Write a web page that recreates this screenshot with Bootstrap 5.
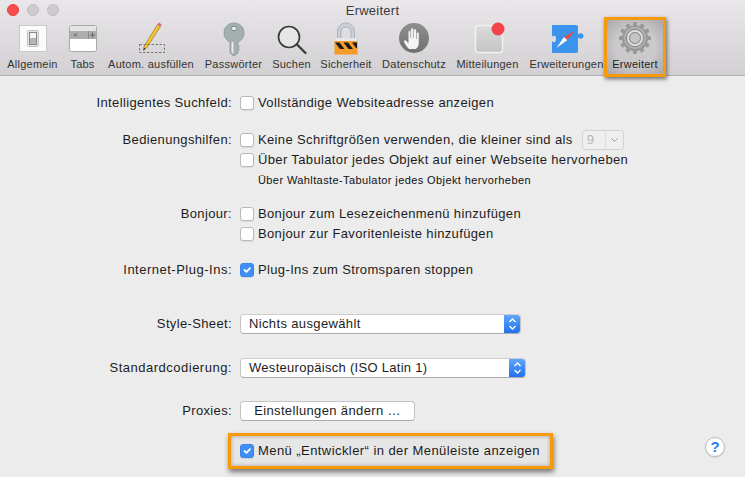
<!DOCTYPE html>
<html lang="de"><head><meta charset="utf-8"><title>Erweitert</title>
<link href="https://cdn.jsdelivr.net/npm/bootstrap@5.3.0/dist/css/bootstrap.min.css" rel="stylesheet">
<style>
html,body{height:100%}
body{width:745px;height:477px;overflow:hidden;background:#ececec;font-family:"Liberation Sans",Arial,sans-serif;font-size:13px;line-height:20px;color:#1c1c1c;letter-spacing:.36px}
.topbar{height:76px;background:linear-gradient(#e9e7e9,#d2d0d2);border-bottom:1px solid #b1b1b1;position:relative}
.lights{position:absolute;left:7px;top:4px;gap:8px}
.lamp{width:12px;height:12px;border-radius:50%;background:#cdcbcd;border:1px solid #c0bec0}
.lamp-red{background:#fb4c4e;border-color:#ea4042}
.wintitle{height:20px;line-height:21px;font-size:13px;color:#3c3c3c;letter-spacing:.25px}
.tools{padding-left:7px;height:55px}
.tool{font-size:11px;line-height:14px;color:#333;letter-spacing:.24px;white-space:nowrap;height:55px;padding-top:1px}
.tool svg{display:block;height:36px;width:36px}
.t1{width:51px}.t2{width:25px;margin-left:12px}.t3{width:88px;margin-left:12px}.t4{width:59px;margin-left:9px}.t5{width:39px;margin-left:9px}.t6{width:52px;margin-left:9px}.t7{width:66px;margin-left:9px}.t8{width:65px;margin-left:8px}.t9{width:75px;margin-left:9px}
.tool-hot{position:absolute;left:604px;top:17px;width:62px;height:60px;border:3px solid #f79a0a;background:radial-gradient(ellipse at center,#cbc9cb 50%,#a8a6a8 100%);box-shadow:1px 2px 4px rgba(0,0,0,.55);padding-top:1px;color:#222}
.prefs{padding-top:17px}
.prow{height:20px}
.plabel{width:232px;text-align:right;margin-right:8px;flex:none}
.plabel-wide{letter-spacing:.5px}
.form-check-input.tick{width:14px;height:14px;margin:3px 4px 0 0;flex:none;border:1px solid #b9b9b9;border-radius:3px;background-color:#fff;box-shadow:0 1px 1px rgba(0,0,0,.08)}
.form-check-input.tick:checked{background-color:#3f8ff7;border-color:#3a84e8}
.hint{font-size:11px;margin-left:258px;letter-spacing:.4px;color:#111}
.gap-a{margin-top:17px}.gap-b{margin-top:14px}.gap-c{margin-top:16px}.gap-d{margin-top:34px}.gap-e{margin-top:24px}.gap-f{margin-top:23px}
.sizebox{width:42px;height:20px;border:1px solid #d4d4d4;border-radius:3px;margin-left:9px;background:#efefef;color:#b5b5b5;font-size:13px;padding-left:4px;line-height:18px}
.sizebox i{margin-left:auto;width:18px;border-left:1px solid #dedede;height:18px}
.picker{height:20px;line-height:18px;background:#fff;border:1px solid #c4c4c4;border-top-color:#cdcdcd;border-bottom-color:#ababab;border-radius:4px;padding:0 0 0 8px;overflow:hidden}
.picker-a{width:281px}.picker-b{width:286px;letter-spacing:.29px}
.cap{margin-left:auto;width:17px;height:20px;margin-top:-1px;margin-right:-1px;background:linear-gradient(#62a9fb,#1f6eee)}
.pushbtn{width:175px;height:20px;background:#fff;border:1px solid #c4c4c4;border-bottom-color:#ababab;border-radius:4px;text-align:center;padding:0;font-size:13px;line-height:18px;color:#1c1c1c;letter-spacing:.36px}
.callout{margin-left:228px;width:325px;height:36px;border:3px solid #f79a0a;box-shadow:1px 3px 5px rgba(0,0,0,.5),inset 0 0 4px rgba(0,0,0,.3);padding-left:9px;margin-top:12px;position:relative;background:#e6e6e6;letter-spacing:.43px}
.helpdot{position:absolute;left:705px;top:437px;width:20px;height:20px;border-radius:50%;background:#fff;border:1px solid #bcbcbc;color:#2d7ff0;font-weight:700;font-size:15px;line-height:18px;text-align:center;letter-spacing:0;box-shadow:0 1px 1px rgba(0,0,0,.1)}
</style></head>
<body>
<div class="topbar">
  <div class="lights d-flex"><span class="lamp lamp-red"></span><span class="lamp"></span><span class="lamp"></span></div>
  <div class="wintitle text-center">Erweitert</div>
  <div class="tools d-flex">
    <div class="tool t1 d-flex flex-column align-items-center">
      <svg viewBox="0 0 36 36"><rect x="4.500" y="4.500" width="27" height="26" fill="#fbfbfb" stroke="#c9c9c9"/><rect x="12.500" y="9.500" width="11" height="16" rx="1" fill="#e2e2e2" stroke="#c4c4c4"/><rect x="14.500" y="11.500" width="7" height="12" fill="#f4f4f4" stroke="#8a8a8a"/><rect x="15" y="17" width="6" height="6" fill="#b5b5b5"/></svg>
      Allgemein</div>
    <div class="tool t2 d-flex flex-column align-items-center">
      <svg viewBox="0 0 36 36"><rect x="4.500" y="4.500" width="27" height="26" rx="2" fill="#fff" stroke="#a8a8a8"/><rect x="5" y="5" width="26" height="5" fill="#e4e4e4"/><rect x="5" y="10" width="26" height="8" fill="#adadad"/><path d="M9 12.500l3 3M12 12.500l-3 3" stroke="#666" fill="none"/><path d="M23.500 10v8" stroke="#888"/><path d="M27.500 11.500v5M25 14h5" stroke="#666"/></svg>
      Tabs</div>
    <div class="tool t3 d-flex flex-column align-items-center">
      <svg viewBox="0 0 36 36"><path d="M24.500 3.500L27.500 5.500 13.500 27 10.500 29.500 11 25.500z" fill="#f1c232" stroke="#8b6b10" stroke-width=".6"/><path d="M24.500 3.500l1.300-2 3 2-1.300 2z" fill="#d6688a"/><path d="M10.500 29.500l.5-3 1.500 1z" fill="#333"/><rect x="6.500" y="23.500" width="25" height="8" fill="none" stroke="#777" stroke-dasharray="2.500 1.500"/></svg>
      Autom. ausfüllen</div>
    <div class="tool t4 d-flex flex-column align-items-center">
      <svg viewBox="0 0 36 36"><path d="M18 2c5.800 0 10 4.200 10 10 0 4.200-2.500 7.500-6 9v3l1.500 1.500-1.500 1.500 1.500 1.500-1.500 1.500v2l-3 2.500h-2l-3-2.500V21c-3.500-1.500-6-4.800-6-9C8 6.200 12.200 2 18 2z" fill="#a3aeaf" stroke="#87918f" stroke-width=".7"/><ellipse cx="18" cy="7.500" rx="2.800" ry="2.200" fill="#e6e9e9" stroke="#7e8889"/><path d="M16.500 21v11" stroke="#e6eaea" stroke-width="2"/></svg>
      Passwörter</div>
    <div class="tool t5 d-flex flex-column align-items-center">
      <svg viewBox="0 0 36 36"><circle cx="15" cy="16" r="10.500" fill="#f4f4f4" fill-opacity=".4" stroke="#3a3a3a" stroke-width="1.700"/><path d="M23 23.500l8.500 8.500" stroke="#3a3a3a" stroke-width="2.300" stroke-linecap="round"/></svg>
      Suchen</div>
    <div class="tool t6 d-flex flex-column align-items-center">
      <svg viewBox="0 0 36 36"><path d="M9.500 18v-7c0-5.500 4-9 8.500-9s8.500 3.500 8.500 9v7h-3.500v-7c0-3.200-2.200-5-5-5s-5 1.800-5 5v7z" fill="#c9d0da" stroke="#98a0ab" stroke-width=".7"/><rect x="6.500" y="17" width="23" height="16.500" fill="#f49b2a"/><rect x="6.500" y="17" width="23" height="3" fill="#e3e7ec"/><path d="M7 21.500h4.500l5 6.500H12zM15.500 21.500H20l5 6.500h-4.500zM24 21.500h5V27h-1z" fill="#1a1a1a"/></svg>
      Sicherheit</div>
    <div class="tool t7 d-flex flex-column align-items-center">
      <svg viewBox="0 0 36 36"><defs><linearGradient id="hg" x1="0" y1="0" x2="0" y2="1"><stop offset="0" stop-color="#8f8f8f"/><stop offset="1" stop-color="#6f6f6f"/></linearGradient></defs><circle cx="18" cy="17" r="15" fill="url(#hg)"/><path d="M13 28c-2-2-4.500-5.500-5-7.500 0-1.500 1.500-1.500 2.500-.5l2 2.500V11c0-1.700 2-1.700 2 0v6h.6V8.500c0-1.700 2.300-1.700 2.300 0V17h.6V9.500c0-1.700 2.200-1.700 2.200 0V18h.6v-5.500c0-1.500 2-1.500 2 0V22c0 3-1.500 5-3 6h-6z" fill="#f4f4f4"/></svg>
      Datenschutz</div>
    <div class="tool t8 d-flex flex-column align-items-center">
      <svg viewBox="0 0 36 36"><defs><linearGradient id="mg" x1="0" y1="0" x2="0" y2="1"><stop offset="0" stop-color="#dcdcdc"/><stop offset="1" stop-color="#c4c4c4"/></linearGradient></defs><rect x="5.500" y="4.500" width="27" height="27" rx="3" fill="url(#mg)" stroke="#f2f2f2" stroke-width="1.500"/><circle cx="28" cy="8" r="6.500" fill="#f3424a"/></svg>
      Mitteilungen</div>
    <div class="tool t9 d-flex flex-column align-items-center">
      <svg viewBox="0 0 36 36"><path d="M3.500 4h23.500c1.200 0 2 .8 2 2v7.500c2-2 5.500-1.500 5.500 1.500s-3.500 3.500-5.500 1.500V30c0 1.200-.8 2-2 2H4.500c-1 0-1.500-.5-1.500-1.500V20.500c2.500 1.500 4 .5 4-2.500s-1.500-4-4-2.500V5c0-.6.300-1 .5-1z" fill="#3a93ec"/><path d="M7.500 27l7.500-11 3.500 3z" fill="#fff"/><path d="M25.500 10l-10.500 6 3.500 3z" fill="#ea4b45"/></svg>
      Erweiterungen</div>
    <div class="tool tool-hot d-flex flex-column align-items-center">
      <svg viewBox="0 0 36 36"><defs><linearGradient id="gg" x1="0" y1="0" x2="0" y2="1"><stop offset="0" stop-color="#a6a6a6"/><stop offset="1" stop-color="#8c8c8c"/></linearGradient></defs><g fill="url(#gg)"><circle cx="18" cy="17" r="13"/></g><g fill="#999"><rect x="16" y="1" width="4" height="32" rx="1"/><rect x="16" y="1" width="4" height="32" rx="1" transform="rotate(30 18 17)"/><rect x="16" y="1" width="4" height="32" rx="1" transform="rotate(60 18 17)"/><rect x="16" y="1" width="4" height="32" rx="1" transform="rotate(90 18 17)"/><rect x="16" y="1" width="4" height="32" rx="1" transform="rotate(120 18 17)"/><rect x="16" y="1" width="4" height="32" rx="1" transform="rotate(150 18 17)"/></g><circle cx="18" cy="17" r="11" fill="#b0b0b0"/><circle cx="18" cy="17" r="8.500" fill="none" stroke="#7f7f7f" stroke-width="1"/><circle cx="18" cy="17" r="7" fill="none" stroke="#dedede" stroke-width="2"/><circle cx="18" cy="17" r="5.500" fill="#c6c4c6" stroke="#8c8c8c"/></svg>
      Erweitert</div>
  </div>
</div>
<div class="prefs">
  <div class="prow d-flex"><div class="plabel">Intelligentes Suchfeld:</div><input class="form-check-input tick" type="checkbox"><span>Vollständige Websiteadresse anzeigen</span></div>
  <div class="prow d-flex gap-a"><div class="plabel">Bedienungshilfen:</div><input class="form-check-input tick" type="checkbox"><span>Keine Schriftgrößen verwenden, die kleiner sind als</span><div class="sizebox d-flex">9<i class="d-flex align-items-center justify-content-center"><svg width="9" height="6" viewBox="0 0 9 6"><path d="M1.500 1.500L4.500 4.500 7.500 1.500" fill="none" stroke="#9a9a9a"/></svg></i></div></div>
  <div class="prow d-flex"><div class="plabel"></div><input class="form-check-input tick" type="checkbox"><span>Über Tabulator jedes Objekt auf einer Webseite hervorheben</span></div>
  <div class="prow hint">Über Wahltaste-Tabulator jedes Objekt hervorheben</div>
  <div class="prow d-flex gap-b"><div class="plabel">Bonjour:</div><input class="form-check-input tick" type="checkbox"><span>Bonjour zum Lesezeichenmenü hinzufügen</span></div>
  <div class="prow d-flex"><div class="plabel"></div><input class="form-check-input tick" type="checkbox"><span>Bonjour zur Favoritenleiste hinzufügen</span></div>
  <div class="prow d-flex gap-c"><div class="plabel plabel-wide">Internet-Plug-Ins:</div><input class="form-check-input tick" type="checkbox" checked><span>Plug-Ins zum Stromsparen stoppen</span></div>
  <div class="prow d-flex gap-d"><div class="plabel">Style-Sheet:</div><div class="picker picker-a d-flex">Nichts ausgewählt<span class="cap d-flex align-items-center justify-content-center"><svg width="9" height="14" viewBox="0 0 9 14"><path d="M1.500 5L4.500 2 7.500 5M1.500 9L4.500 12 7.500 9" fill="none" stroke="#fff" stroke-width="1.300"/></svg></span></div></div>
  <div class="prow d-flex gap-e"><div class="plabel plabel-wide">Standardcodierung:</div><div class="picker picker-b d-flex">Westeuropäisch (ISO Latin 1)<span class="cap d-flex align-items-center justify-content-center"><svg width="9" height="14" viewBox="0 0 9 14"><path d="M1.500 5L4.500 2 7.500 5M1.500 9L4.500 12 7.500 9" fill="none" stroke="#fff" stroke-width="1.300"/></svg></span></div></div>
  <div class="prow d-flex gap-f"><div class="plabel">Proxies:</div><button type="button" class="btn pushbtn">Einstellungen ändern …</button></div>
  <div class="callout d-flex align-items-center"><input class="form-check-input tick mt-0" type="checkbox" checked><span>Menü „Entwickler“ in der Menüleiste anzeigen</span></div>
</div>
<div class="helpdot">?</div>
<script src="https://cdn.jsdelivr.net/npm/bootstrap@5.3.0/dist/js/bootstrap.bundle.min.js"></script>
</body></html>
